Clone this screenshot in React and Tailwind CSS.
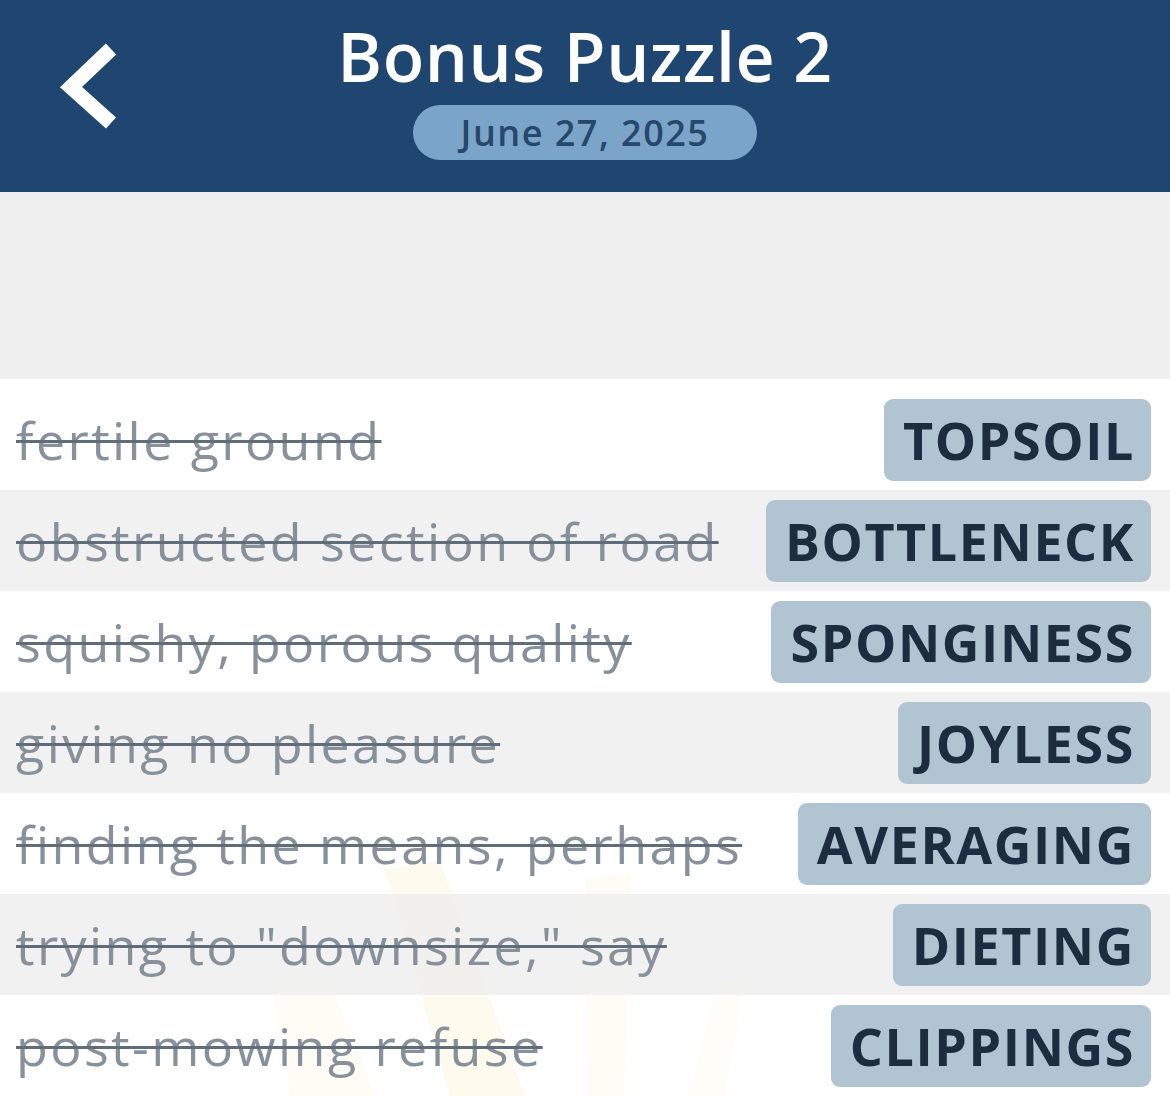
import React from 'react';

const rows = [
  { clue: 'fertile ground', answer: 'TOPSOIL' },
  { clue: 'obstructed section of road', answer: 'BOTTLENECK' },
  { clue: 'squishy, porous quality', answer: 'SPONGINESS' },
  { clue: 'giving no pleasure', answer: 'JOYLESS' },
  { clue: 'finding the means, perhaps', answer: 'AVERAGING' },
  { clue: 'trying to "downsize," say', answer: 'DIETING' },
  { clue: 'post-mowing refuse', answer: 'CLIPPINGS' },
];

function BackChevron() {
  return (
    <svg width="70" height="100" viewBox="0 0 70 100" className="block">
      <polyline points="59,12 19,50 59,86" fill="none" stroke="white" strokeWidth="15" strokeLinecap="butt" strokeLinejoin="miter" />
    </svg>
  );
}

export default function App() {
  return (
    <div className="w-[1170px] h-[1096px] overflow-hidden bg-white font-['Open_Sans',sans-serif] relative">
      <header className="h-[192px] bg-[#1f4670] relative flex flex-col items-center">
        <div className="absolute left-[52px] top-[37px]">
          <BackChevron />
        </div>
        <h1 className="mt-[15px] text-[68px] leading-[82px] font-semibold text-white tracking-[0.5px]">Bonus Puzzle 2</h1>
        <div className="mt-[8px] h-[55px] w-[344px] rounded-full bg-[#7aa5c9] flex items-center justify-center">
          <span className="text-[36px] font-semibold text-[#27476b] leading-none tracking-[1.5px]">June 27, 2025</span>
        </div>
      </header>

      <div className="h-[187px] bg-[#f0f0f0]" />

      <div className="relative">
        <svg className="absolute inset-0 pointer-events-none" width="1170" height="717" viewBox="0 0 1170 717">
          <polygon points="385,490 440,482 525,717 450,717" fill="#fbe9b0" opacity="0.55" />
          <polygon points="270,590 320,580 375,717 290,717" fill="#fbedc4" opacity="0.45" />
          <polygon points="585,500 630,495 625,717 588,717" fill="#fbedc4" opacity="0.45" />
          <polygon points="715,610 745,605 725,717 690,717" fill="#fcf1d4" opacity="0.4" />
        </svg>
        <div className="h-[10px] bg-white/60" />
        {rows.map((r, i) => (
          <div
            key={i}
            className={`relative h-[101px] flex items-center justify-between pl-[16px] pr-[19px] ${i % 2 === 1 ? 'bg-[#f0f0f0]/90' : 'bg-white/60'}`}
          >
            <span className="text-[52px] text-[#86919b] line-through decoration-[#5f6d7a] decoration-[3px] whitespace-nowrap tracking-[2.4px]">{r.clue}</span>
            <span className="h-[82px] flex items-center pl-[19px] pr-[16px] rounded-[9px] bg-[#b1c4d2] text-[52px] font-bold text-[#1c2d40] whitespace-nowrap tracking-[1.6px]">{r.answer}</span>
          </div>
        ))}
      </div>
    </div>
  );
}
